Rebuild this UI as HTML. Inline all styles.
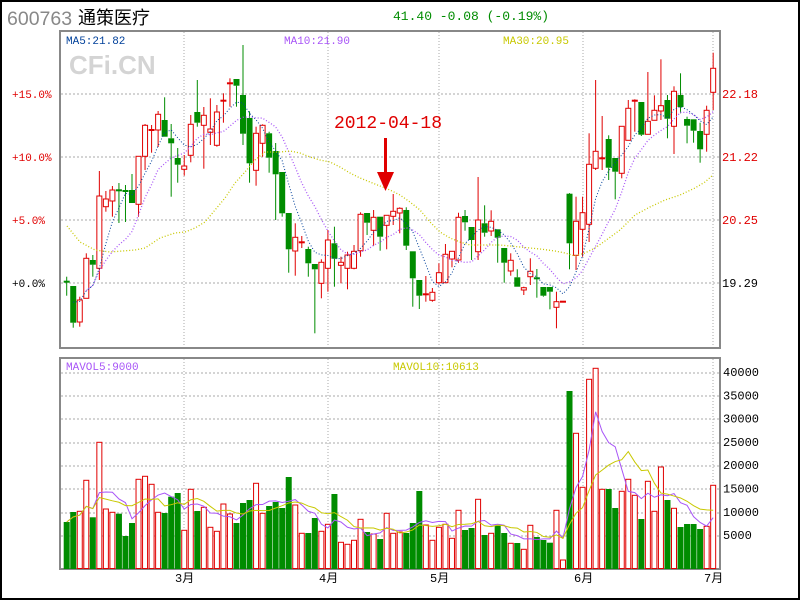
<!DOCTYPE html>
<html><head><meta charset="utf-8">
<style>
html,body{margin:0;padding:0;background:#fff;}
#wrap{position:relative;width:800px;height:600px;overflow:hidden;}
svg{position:absolute;left:0;top:0;}
text{font-family:"Liberation Mono",monospace;}
</style></head><body>
<div id="wrap">
<svg id="s" width="800" height="600" viewBox="0 0 800 600" xmlns="http://www.w3.org/2000/svg">
<rect x="1" y="1" width="798" height="598" fill="none" stroke="#000" stroke-width="2"/>
<text x="7" y="25" style="font-family:'Liberation Sans',sans-serif" font-size="19.5" fill="#888">600763</text>
<text x="78" y="24" style="font-family:'Liberation Sans','Noto Sans CJK SC',sans-serif" font-size="18" fill="#000">通策医疗</text>
<text x="393" y="20" font-size="13" fill="#008c00">41.40 -0.08 (-0.19%)</text>
<text x="69" y="74" style="font-family:'Liberation Sans',sans-serif;font-weight:bold" font-size="26" fill="#d4d4d4">CFi.CN</text>
</svg>
</div>
<script>
var s=document.getElementById('s');var NS='http://www.w3.org/2000/svg';
function el(t,a,txt){var e=document.createElementNS(NS,t);for(var k in a)e.setAttribute(k,a[k]);if(txt)e.textContent=txt;s.appendChild(e);return e;}
var RED='#e00000',GRN='#008c00',GR='#aaa';
el('rect',{x:60,y:31,width:660,height:317,fill:'none',stroke:'#888','stroke-width':2});
el('rect',{x:60,y:358,width:660,height:211,fill:'none',stroke:'#888','stroke-width':2});
var vx=[184,328,439,583,713];
vx.forEach(function(x){el('line',{x1:x,y1:32,x2:x,y2:347,stroke:GR,'stroke-dasharray':'1 2'});el('line',{x1:x,y1:359,x2:x,y2:568,stroke:GR,'stroke-dasharray':'1 2'});});
[94,157,220,283].forEach(function(y){el('line',{x1:61,y1:y,x2:719,y2:y,stroke:GR,'stroke-dasharray':'2 2'});});
[373,396,419,443,466,489,513,536].forEach(function(y){el('line',{x1:61,y1:y,x2:719,y2:y,stroke:GR,'stroke-dasharray':'2 2'});});
[['+15.0%',98,RED],['+10.0%',161,RED],['+5.0%',224,RED],['+0.0%',287,'#000']].forEach(function(a){el('text',{x:12,y:a[1],'font-size':11,fill:a[2]},a[0]);});
[['22.18',98,RED],['21.22',161,RED],['20.25',224,RED],['19.29',287,'#000']].forEach(function(a){el('text',{x:722,y:a[1],'font-size':12,fill:a[2]},a[0]);});
[40000,35000,30000,25000,20000,15000,10000,5000].forEach(function(v,i){el('text',{x:723,y:376+i*23.3,'font-size':12,fill:'#000'},String(v));});
['3月','4月','5月','6月','7月'].forEach(function(m,i){el('text',{x:vx[i]-9,y:582,'font-size':12,fill:'#000',style:"font-family:'Liberation Mono','Noto Sans CJK SC',monospace"},m);});
el('text',{x:66,y:44,'font-size':11,fill:'#00409a'},'MA5:21.82');
el('text',{x:284,y:44,'font-size':11,fill:'#a855f7'},'MA10:21.90');
el('text',{x:503,y:44,'font-size':11,fill:'#c8c800'},'MA30:20.95');
el('text',{x:66,y:370,'font-size':11,fill:'#a855f7'},'MAVOL5:9000');
el('text',{x:393,y:370,'font-size':11,fill:'#c8c800'},'MAVOL10:10613');
var C=[['g',281.7,281.7,276.7,295.7],['g',286,322.7,286,327.7],['r',300,322,296.7,326.7],['r',258.3,298.3,253.3,298.3],['g',260,264.7,255,276.7],['r',196,268.3,171,280],['r',199,206.7,191,211.7],['r',190,201,186,216.7],['g',190.3,190.3,183,223],['g',191,191,185,222],
['g',190,203,174,203],['r',156.3,204.3,156.3,216.7],['r',125.3,156.3,124,170],['r',130,130,125,152.7],['r',114.3,130,111,147],['g',120,136.7,97.3,136.7],['g',138.3,143.3,124,196.7],['g',158,164.7,148,182.7],['r',166,169.3,155,175.7],['r',124.3,155.3,115,162.3],
['g',112,122.7,80,126.7],['r',115.3,125.3,107,168.7],['r',129,132.3,98.3,145],['r',112,145.3,105,146.7],['r',100.7,100.7,93.3,122.7],['r',83.3,83.3,78.3,106.7],['g',79,85.7,79,106.7],['g',95,133.7,45,145],['g',118,163.3,111.3,182.7],['r',133.3,170.3,126.7,185.7],
['r',125.3,143.3,124.3,156.7],['g',133.3,157.7,131.7,172.7],['g',151,174.3,143,220],['g',172,213.3,172,216.7],['g',213,249.3,213,272.7],['r',237.3,251,223.3,275.7],['r',242.3,242.3,236,248],['g',249,263.3,246.7,276.7],['g',264,269.3,264,333.3],['r',262.3,283.3,259.3,298.3],
['r',240,268.3,230,291.7],['g',243.3,258.7,226.7,286.7],['r',262.3,265.3,256.7,283.3],['r',255,268.3,251.7,289.3],['r',251.3,268.3,245,269.3],['r',214.3,250.7,212.3,256.7],['g',213,222.7,213,235],['r',217.3,230.3,210,245.7],['g',216.7,236.7,216.7,250.7],['r',215.3,225.3,215,249.3],
['r',211.3,216.3,194,225],['r',208.3,213,207.3,233.3],['g',210,245.7,207.3,250],['g',251.3,278.3,251.3,306.7],['g',280,295.7,280,309],['r',294.3,294.3,276,301.7],['r',292.3,300.3,288,301.7],['r',272.7,282.7,263.3,284.3],['r',254.3,282.7,244,282.7],['r',251.3,259,251.3,267.3],
['r',217.3,260,212.7,262.7],['g',216,222.3,210,230.7],['g',227,240,227,260],['r',220,251.7,177,260],['g',223.3,232.7,205.3,236.7],['r',221.3,231,210.3,236],['g',229.3,237.7,229.3,262.7],['g',248,262.7,248,282.7],['r',260.3,271,253.3,275.7],['g',277.3,286.7,269.3,286.7],
['r',287.7,290,286.7,295],['r',271.3,276.7,258.3,285],['g',278.3,278.3,269,297.7],['g',287,295.7,287,296.7],['g',287,291.7,287,309.3],['r',301.7,307.3,291.7,328.3],['r',301.7,301.7,301.7,301.7],['g',193.7,243.3,193,269.3],['r',221.3,255.3,196.7,270],['r',212.7,229.3,196.7,256.7],
['r',164.3,224.3,133.3,242],['r',151.3,168.3,80,170],['r',158.3,158.3,116,170],['g',139,167.7,135.3,180],['g',158,171.7,158,199.3],['r',126.3,173.3,126.3,178.3],['r',108.3,140.3,100,140.3],['r',100.7,100.7,99.3,131.7],['g',102,134.7,102,136],['r',121.3,134.3,72,134.3],
['r',110.3,120.3,95.3,120.3],['r',105.7,111,59.3,120],['g',100,118.7,95,138.3],['r',91.3,126.3,86.3,154],['g',95,107,73.3,113.3],['g',119,125.7,116.7,143.3],['g',119.3,130.7,119.3,142.7],['g',131,149.3,122.7,162.7],['r',110.3,134.3,105.7,151.7],['r',68.3,92.3,52.7,110]];
var V=[522,512,511.3,480.3,517.3,442.3,509,512.3,513.7,536,523,479.3,476.3,484.3,512.3,513,496.7,493,530.3,489.3,511,507.3,527.3,531.3,504,514,523,503,500,483.3,513.3,506,502,508,477,505,533.3,533,518,531.3,524.3,494,542.3,544.3,540.3,519.3,532,534,539,513.3,533.3,
532,533,523,491,525,540.3,527.3,524.3,538.3,510.3,530,528,499.3,535,533.3,525.7,533,543.3,543,549.3,525.3,537,540,542.7,510.3,560,391,433.3,487.3,379.3,368.3,489.3,489,508,491.3,479.3,495.3,519,481.3,511.3,467,500,508.3,527,524,524,529,526.3,485.3];
function X(i){return 66.7+i*6.53;}
var closes=[];
C.forEach(function(c,i){var x=X(i),col=c[0]=='r'?RED:GRN;
 closes.push(c[0]=='r'?c[1]:c[2]);
 el('line',{x1:x,y1:c[3],x2:x,y2:c[1],stroke:col,'stroke-width':1});
 el('line',{x1:x,y1:c[2],x2:x,y2:c[4],stroke:col,'stroke-width':1});
 var h=c[2]-c[1];
 if(h<1.5){el('rect',{x:x-3,y:c[1]-1,width:6,height:2,fill:col});}
 else if(c[0]=='r')el('rect',{x:x-2.5,y:c[1],width:5,height:h,fill:'#fff',stroke:col,'stroke-width':1});
 else el('rect',{x:x-3,y:c[1],width:6,height:h,fill:col});
 var vt=V[i];
 if(c[0]=='r')el('rect',{x:x-2.5,y:vt,width:5,height:568.5-vt,fill:'#fff',stroke:col,'stroke-width':1});
 else el('rect',{x:x-3,y:vt,width:6,height:569-vt,fill:col});
});
function ma(arr,n){var out=[];for(var i=0;i<arr.length;i++){var a=Math.max(0,i-n+1),s2=0;for(var j=a;j<=i;j++)s2+=arr[j];out.push(s2/(i-a+1));}return out;}
function pl(pts,col,dash,w){el('polyline',{points:pts.join(' '),fill:'none',stroke:col,'stroke-width':w||1,'stroke-dasharray':dash||''});}
var m5=ma(closes,5),m10=ma(closes,10);
pl(m5.map(function(v,i){return X(i)+','+v;}).slice(1),'#00409a','1 2');
pl(m10.map(function(v,i){return X(i)+','+v;}).slice(3),'#a855f7','1 2',1.3);
var m30=[[67,226],[80,242],[95,250],[110,252],[135,250],[145,248],[160,238],[175,233],[185,232],[195,228],[205,222],[215,210],[225,198],[235,183],[245,172],[255,160],[265,152],[280,152],[290,151],[300,153],[310,157],[320,160],[330,162],[340,167],[350,173],[360,178],[370,182],[380,186],[390,190],[400,195],[410,202],[420,210],[430,222],[440,232],[450,238],[460,242],[470,245],[480,245],[500,245],[520,247],[540,249],[555,251],[565,253],[575,256],[585,253],[595,248],[605,241],[620,230],[635,215],[650,207],[665,200],[680,195],[695,188],[705,182],[713,175]];
pl(m30.map(function(p){return p[0]+','+p[1];}),'#c8c800','1 2',1.3);
var vv=V.map(function(y){return 569-y;});
var mv5=ma(vv,5),mv10=ma(vv,10);
pl(mv5.map(function(v,i){return X(i)+','+(569-v);}),'#a855f7','',1);
pl(mv10.map(function(v,i){return X(i)+','+(569-v);}),'#c8c800','',1);
el('text',{x:334,y:128,'font-size':18,fill:RED},'2012-04-18');
el('rect',{x:384,y:138,width:3,height:36,fill:RED});
el('polygon',{points:'377,172 394,172 385.5,191',fill:RED});
</script>
</body></html>
